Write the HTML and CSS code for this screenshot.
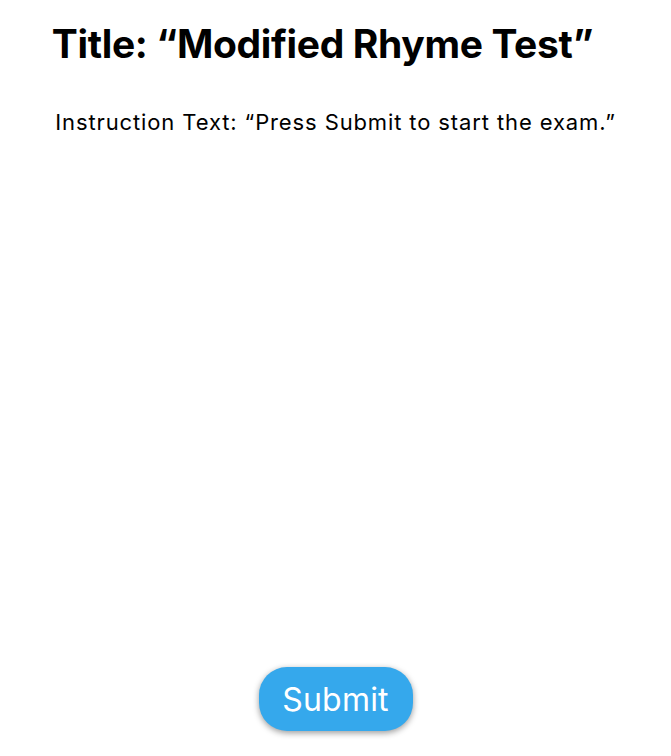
FILE: index.html
```html
<!DOCTYPE html>
<html lang="en">
<head>
<meta charset="utf-8">
<title>Modified Rhyme Test</title>
<link rel="stylesheet" href="styles.css">
</head>
<body>
<main class="screen">
  <h1 class="title">Title: “Modified Rhyme Test”</h1>
  <p class="instruction">Instruction Text: “Press Submit to start the exam.”</p>
  <div class="spacer"></div>
  <button class="submit" type="button">Submit</button>
</main>
</body>
</html>
```
FILE: styles.css
```css
html, body {
  margin: 0;
  padding: 0;
  background: #ffffff;
}
.screen {
  width: 671px;
  height: 756px;
  box-sizing: border-box;
  display: flex;
  flex-direction: column;
  align-items: center;
  font-family: Inter, "Noto Sans", sans-serif;
  color: #000;
  padding: 21px 0 25px;
}
.title {
  margin: 0 26px 0 0;
  font-size: 39px;
  font-weight: 700;
  line-height: 46px;
  letter-spacing: -0.35px;
}
.instruction {
  margin: 41px 0 0;
  font-size: 22px;
  font-weight: 400;
  line-height: 28px;
  letter-spacing: 0.88px;
}
.spacer {
  flex: 1;
}
.submit {
  width: 154px;
  height: 64px;
  border: none;
  border-radius: 28px;
  background: #35a8ec;
  color: #ffffff;
  font-family: Inter, "Noto Sans", sans-serif;
  font-size: 32px;
  font-weight: 400;
  letter-spacing: 0.2px;
  box-shadow: 0 2px 6px rgba(0, 0, 0, 0.4);
  padding: 0;
}
```
